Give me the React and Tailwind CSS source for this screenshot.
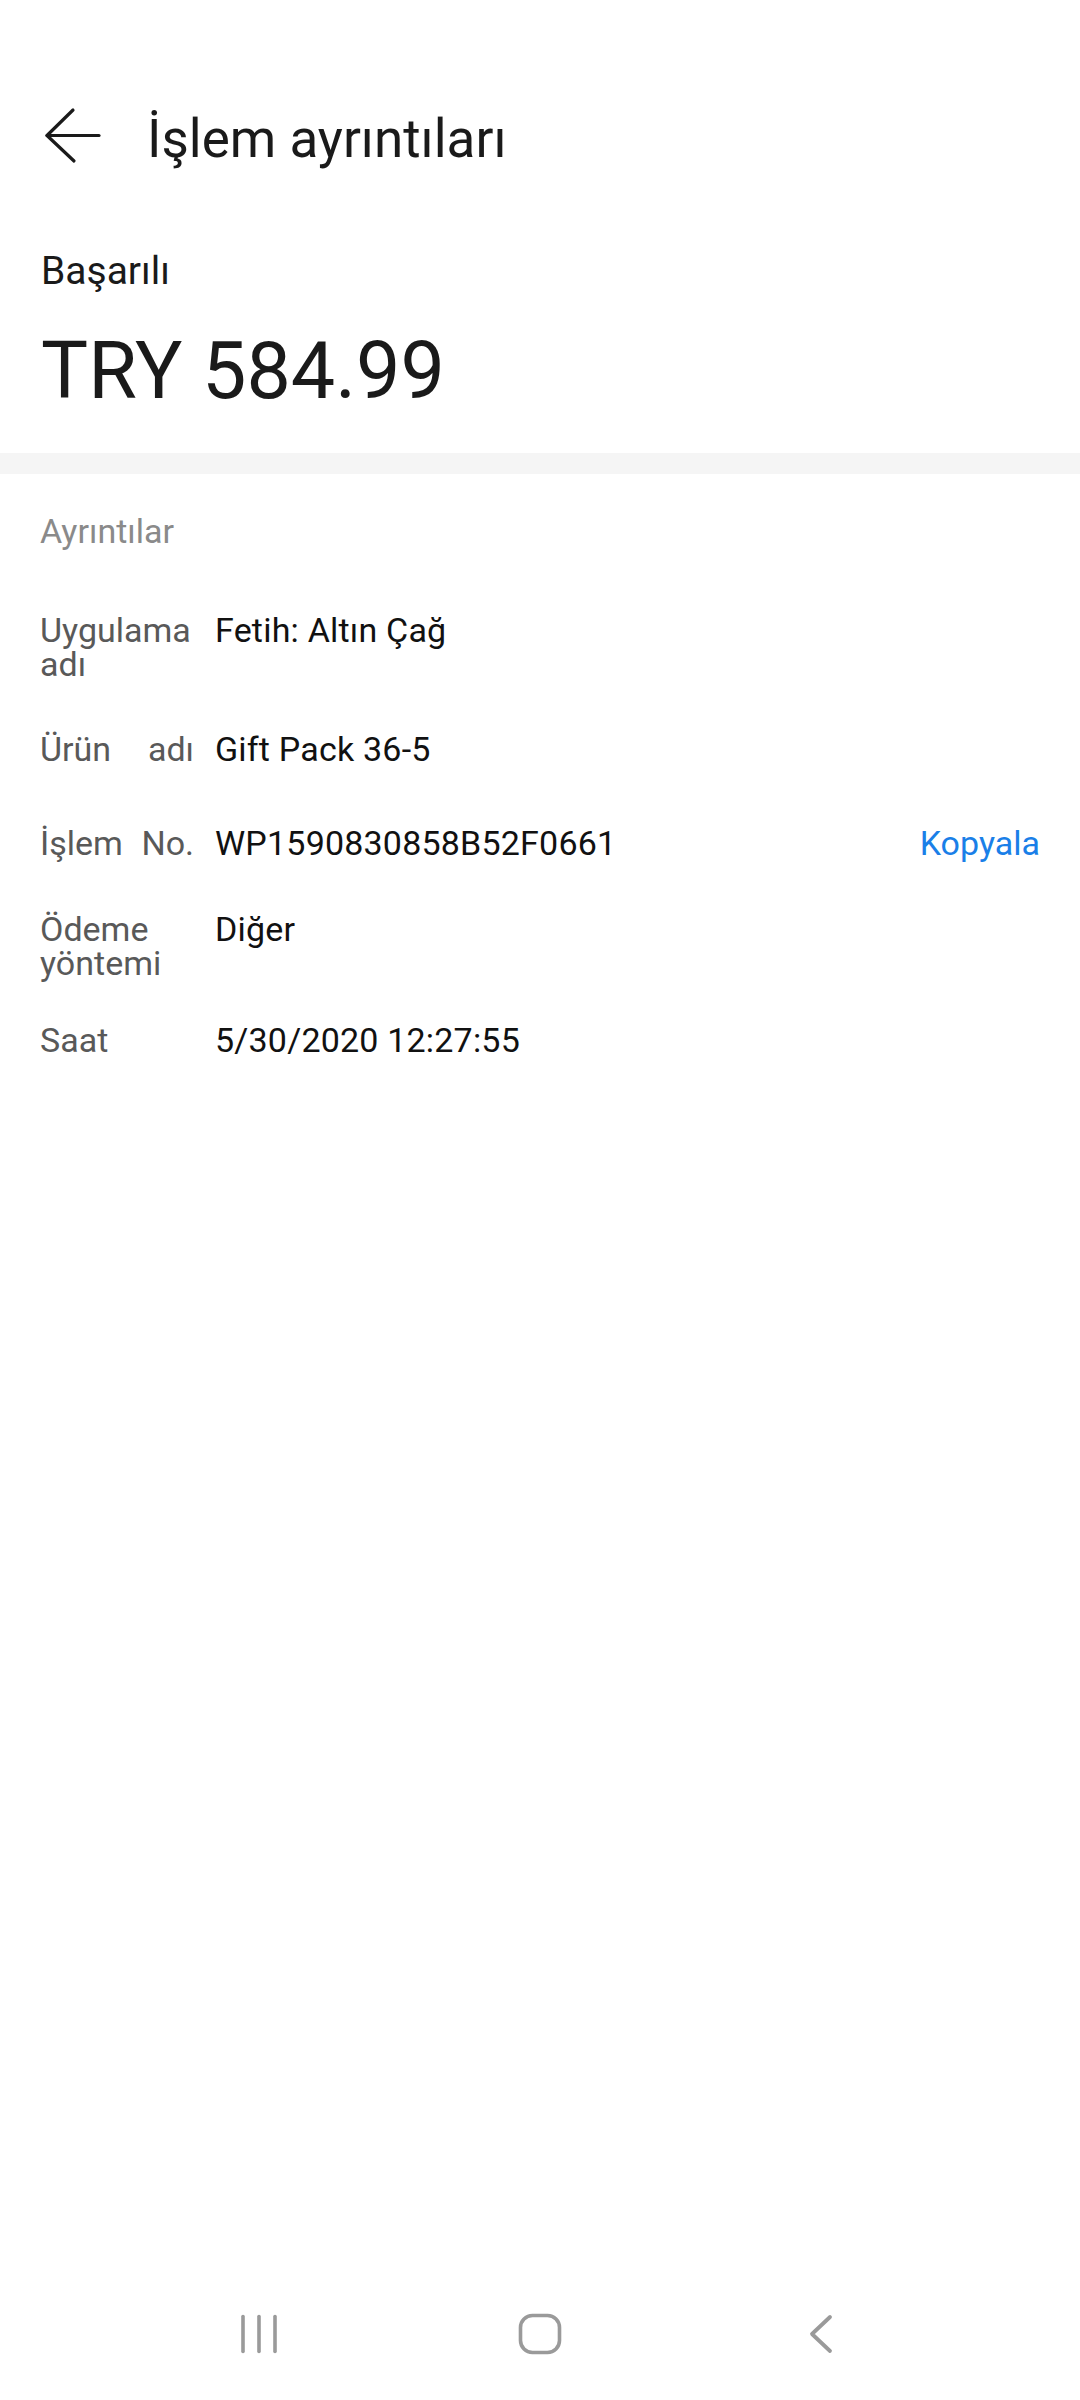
import React from 'react';

const rows = [
  { label: 'Uygulama adı', value: 'Fetih: Altın Çağ', space: 'mt-[65px]' },
  { label: 'Ürün adı', value: 'Gift Pack 36-5', space: 'mt-[51px]' },
  { label: 'İşlem No.', value: 'WP1590830858B52F0661', space: 'mt-[60px]', copy: true },
  { label: 'Ödeme yöntemi', value: 'Diğer', space: 'mt-[52px]' },
  { label: 'Saat', value: '5/30/2020 12:27:55', space: 'mt-[43px]' },
];

const BackArrow = () => (
  <svg width="58" height="58" viewBox="0 0 58 58" fill="none" stroke="#1a1a1a" strokeWidth="3.2" strokeLinecap="round" strokeLinejoin="round">
    <path d="M3 28.5 L55 28.5" />
    <path d="M29 3 L3 28.5 L30 54" />
  </svg>
);

const NavBar = () => (
  <div className="h-[132px] flex items-center justify-center">
    <div className="w-[281px] flex justify-center">
      <svg width="40" height="42" viewBox="0 0 40 42" fill="none" stroke="#9a9a9a" strokeWidth="3.6" strokeLinecap="round">
        <path d="M4 3.5 L4 38.5" />
        <path d="M20 3.5 L20 38.5" />
        <path d="M36 3.5 L36 38.5" />
      </svg>
    </div>
    <div className="w-[281px] flex justify-center">
      <svg width="44" height="42" viewBox="0 0 44 42" fill="none" stroke="#9a9a9a" strokeWidth="3.6">
        <rect x="2.5" y="2.5" width="39" height="37" rx="12" />
      </svg>
    </div>
    <div className="w-[281px] flex justify-center">
      <svg width="26" height="42" viewBox="0 0 26 42" fill="none" stroke="#9a9a9a" strokeWidth="3.8" strokeLinecap="round" strokeLinejoin="round">
        <path d="M22 4 L4 21 L22 38" />
      </svg>
    </div>
  </div>
);

const App = () => {
  return (
    <div className="w-[1080px] min-h-[2400px] bg-white flex flex-col font-['Roboto',sans-serif]">
      {/* Header */}
      <div className="flex items-center h-[72px] mt-[100px] pl-[44px]">
        <BackArrow />
        <span className="ml-[45px] mt-[6px] text-[53px] leading-[53px] text-[#1a1a1a]">İşlem ayrıntıları</span>
      </div>

      {/* Status and amount */}
      <div className="pl-[41px] flex flex-col">
        <span className="mt-[80px] text-[39px] leading-[39px] text-[#1a1a1a]">Başarılı</span>
        <span className="mt-[41px] text-[79px] leading-[79px] text-[#1a1a1a]">TRY 584.99</span>
      </div>

      <div className="mt-[42px] h-[21px] bg-[#f5f5f5]" />

      {/* Details */}
      <div className="pt-[40px] px-[40px] flex flex-col">
        <span className="text-[34px] leading-[34px] text-[#8a8a8a]">Ayrıntılar</span>
        {rows.map((row) => (
          <div key={row.label} className={`${row.space} flex items-start text-[34px] leading-[34px]`}>
            <div className="w-[154px] shrink-0 text-justify [text-align-last:justify] text-[#595959]">
              {row.label}
            </div>
            <div className="ml-[21px] flex-1 tracking-[0.2px] text-[#111111]">{row.value}</div>
            {row.copy && <span className="text-[#1a7fe8]">Kopyala</span>}
          </div>
        ))}
      </div>

      <div className="flex-1" />
      <NavBar />
    </div>
  );
};

export default App;
